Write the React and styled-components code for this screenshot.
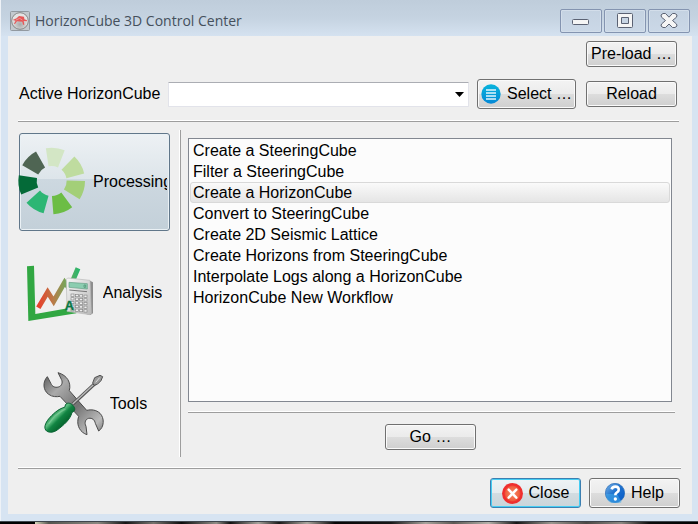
import React, { useState } from "react";
import styled, { createGlobalStyle, css } from "styled-components";

const GlobalStyle = createGlobalStyle`
  *, *::before, *::after { box-sizing: border-box; }
  body {
    margin: 0;
    background: #efefef;
    color: #000;
    font: 16px/20px "Liberation Sans", Arial, sans-serif;
  }
  button, select { font: inherit; color: inherit; margin: 0; }
`;

const Window = styled.div`
  display: flex;
  flex-direction: column;
  min-height: 100vh;
  background: #d7e4f2;
`;

const TitleBar = styled.header`
  display: flex;
  align-items: center;
  gap: 5px;
  height: 36px;
  padding: 6px 8px 0 9px;
  border-left: 1px solid #eef2f7;
  background: linear-gradient(#bfcddb, #c5d3e1 50%, #d5e2f0);
`;

const Title = styled.h1`
  flex: 1;
  margin: 0;
  font: 14px/20px "Open Sans", "Noto Sans", sans-serif;
  color: #45505c;
  white-space: nowrap;
`;

const Captions = styled.div`
  display: flex;
  gap: 2px;
`;

const CaptionButton = styled.button`
  display: grid;
  place-items: center;
  width: 42px;
  height: 24px;
  padding: 0;
  border: 1px solid #8494b0;
  border-radius: 2px;
  background: linear-gradient(#c4d2e1, #cbd8e7);
  box-shadow: inset 0 0 0 1px #d3deea;
`;

const Frame = styled.div`
  flex: 1;
  display: flex;
  flex-direction: column;
  padding: 0 6px 7px 7px;
  border-left: 1px solid #eef2f7;
`;

const Client = styled.main`
  flex: 1;
  display: flex;
  flex-direction: column;
  padding: 5px 11px 6px 10px;
  background: #efefef;
`;

const DesktopEdge = styled.div`
  height: 3px;
  border-top: 1px solid #3e464d;
  background: linear-gradient(
    90deg,
    #000 5%, #d8d8bc 5%, #55554f 7%, #8a8780 14%, #151515 18%, #77736e 22%,
    #0c0c0c 26%, #8f8d86 31%, #111 33%, #a5a29b 37%, #1b1a19 40%, #aaa69e 44%,
    #060606 48%, #171717 56%, #a7a39c 61%, #5c5954 65%, #b5b1aa 70%, #161616 74%,
    #9a968f 79%, #4b4845 84%, #8c8882 89%, #0d0d0d 93%, #000
  );
`;

const Rule = styled.hr`
  width: 100%;
  height: 2px;
  margin: 0;
  border: 0;
  border-top: 1px solid #fff;
  background: #9d9d9d;
`;

const PushButton = styled.button`
  display: flex;
  align-items: center;
  justify-content: center;
  gap: 6px;
  flex: none;
  width: ${(p) => (p.$wide ? 99 : 91)}px;
  height: ${(p) => (p.$tall ? 30 : 26)}px;
  padding: 0;
  border: 1px solid #707070;
  border-radius: 3px;
  background: linear-gradient(#f3f3f3, #ebebeb 50%, #dddddd 50%, #cfcfcf);
  box-shadow: inset 0 0 0 1px #fafafa;
  white-space: nowrap;
  ${(p) =>
    p.$default &&
    css`
      border-color: #3c7fb1;
      background: linear-gradient(#eef3f5, #e5ebee 50%, #d2dce1 50%, #cad4d9);
      box-shadow: inset 0 0 0 1px #45cdf3;
    `}
`;

const TopRow = styled.div`
  display: flex;
  justify-content: flex-end;
  padding-right: 4px;
`;

const PickerRow = styled.div`
  display: flex;
  align-items: center;
  gap: 8px;
  margin: 12px 4px 11px 1px;
`;

const ReloadSlot = styled.div`
  margin-left: 2px;
`;

const Combo = styled.div`
  display: grid;
  flex: 1;
  align-items: center;
  > * { grid-area: 1 / 1; }
  > svg { justify-self: end; margin-right: 5px; pointer-events: none; }
`;

const Select = styled.select`
  appearance: none;
  width: 100%;
  height: 25px;
  padding: 0 20px 0 4px;
  border: 1px solid #e2e3ea;
  border-top-color: #abadb3;
  border-radius: 1px;
  background: #fff;
`;

const Body = styled.div`
  flex: 1;
  display: flex;
  padding: 8px 0 10px;
`;

const Nav = styled.nav`
  display: flex;
  flex-direction: column;
  gap: 13px;
  flex: none;
  width: 162px;
  padding: 3px 10px 4px 1px;
`;

const NavButton = styled.button`
  display: flex;
  align-items: center;
  justify-content: center;
  gap: 8px;
  height: 98px;
  padding: 0;
  border: 1px solid transparent;
  border-radius: 3px;
  background: none;
  > svg { flex: none; overflow: visible; }
  ${(p) =>
    p.$active &&
    css`
      gap: 6px;
      padding-right: 2px;
      border-color: #61778a;
      background: linear-gradient(#edf1f4, #dde5ea 47%, #cdd8e0 47%, #c3d0d9);
      box-shadow: inset 0 0 0 1px #eaf1f5;
    `}
`;

const NavLabel = styled.span`
  min-width: 0;
  overflow: hidden;
  white-space: nowrap;
`;

const Panel = styled.section`
  flex: 1;
  display: flex;
  flex-direction: column;
  min-width: 0;
  padding: 8px 0 7px 7px;
  border-left: 1px solid #9d9d9d;
  box-shadow: -1px 0 0 #fff;
`;

const List = styled.ul`
  flex: 1;
  min-height: 264px;
  margin: 0 9px 9px 0;
  padding: 1px;
  border: 1px solid #828790;
  background: #fcfcfc;
  list-style: none;
`;

const ListItem = styled.button`
  display: block;
  width: 100%;
  height: 21px;
  padding: 0 0 0 2px;
  border: 1px solid transparent;
  border-radius: 3px;
  background: none;
  line-height: 19px;
  text-align: left;
  ${(p) =>
    p.$selected &&
    css`
      border-color: #d9d9d9;
      background: linear-gradient(#fafafa, #e5e5e5);
    `}
`;

const PanelRule = styled.div`
  display: flex;
  margin-right: 6px;
`;

const GoRow = styled.div`
  display: flex;
  justify-content: center;
  margin: 11px 8px 0 0;
`;

const Footer = styled.footer`
  display: flex;
  justify-content: flex-end;
  gap: 8px;
  padding: 9px 1px 0 0;
`;

const HeaderRule = styled.div`
  display: flex;
  margin-right: 2px;
`;

const AppIcon = () => (
  <svg width="20" height="20" viewBox="0 0 60 60" aria-hidden="true">
    <defs>
      <radialGradient id="app" cx=".5" cy=".7">
        <stop offset="0" stopColor="#aaa" />
        <stop offset="1" stopColor="#e4e4e4" />
      </radialGradient>
    </defs>
    <rect x="1.5" y="1.5" width="57" height="57" rx="3" fill="#c3c9ce" stroke="#9299a0" strokeWidth="3" />
    <circle cx="30" cy="30" r="25" fill="url(#app)" stroke="#888" strokeWidth="3" />
    <path d="M8 27L20 22L27 15L42 17L43 25L51 28V31L41 30L43 41H39L37 32L21 31L15 39L12 38L17 29Z" fill="#e75757" />
    <path d="M18 27L29 22L37 27" fill="none" stroke="#f2b3b3" strokeWidth="2" />
  </svg>
);

const captionStroke = { fill: "#f5f5f5", stroke: "#5b6273", strokeWidth: 1 };

const MinimizeGlyph = () => (
  <svg width="18" height="18" viewBox="0 0 18 18" aria-hidden="true">
    <rect x=".5" y="7.5" width="16" height="5" rx="1" {...captionStroke} />
  </svg>
);
const MaximizeGlyph = () => (
  <svg width="18" height="18" viewBox="0 0 18 18" aria-hidden="true">
    <path d="M1.500 2.500Q1.500 1.500 2.500 1.500H15.500Q16.500 1.500 16.500 2.500V14.500Q16.500 15.500 15.500 15.500H2.500Q1.500 15.500 1.500 14.500ZM5.500 5.500V11.500H12.500V5.500Z" fillRule="evenodd" {...captionStroke} />
  </svg>
);
const CloseGlyph = () => (
  <svg width="18" height="18" viewBox="0 0 18 18" aria-hidden="true">
    <path d="M1 3L3 1.500H5.500L9 5.200L12.500 1.500H15L17 3L16.500 5.200L12.500 8.500L16.500 12L17 14L15 15.500H12.500L9 12L5.500 15.500H3L1 14L1.500 12L5.500 8.500L1.500 5.200Z" {...captionStroke} />
  </svg>
);

const SelectIcon = () => (
  <svg width="20" height="20" viewBox="0 0 20 20" aria-hidden="true">
    <defs>
      <linearGradient id="sel" x2="0" y2="1">
        <stop offset="0" stopColor="#08b4dc" />
        <stop offset="1" stopColor="#0588d6" />
      </linearGradient>
    </defs>
    <circle cx="10" cy="10" r="9.700" fill="url(#sel)" />
    <path d="M5 6H15M5 9H15M5 12H15M5 15H15" stroke="#e4f6fd" strokeWidth="1.500" />
  </svg>
);

const CloseIcon = () => (
  <svg width="21" height="21" viewBox="0 0 60 60" aria-hidden="true">
    <defs>
      <radialGradient id="cls">
        <stop offset="0" stopColor="#f58a6a" />
        <stop offset=".65" stopColor="#f0603f" />
        <stop offset=".8" stopColor="#f02d2d" />
        <stop offset="1" stopColor="#ef3030" />
      </radialGradient>
    </defs>
    <circle cx="30" cy="30" r="30" fill="url(#cls)" />
    <path d="M19 19L41 42M41 19L19 42" stroke="#fff" strokeWidth="7" strokeLinecap="round" />
  </svg>
);

const HelpIcon = () => (
  <svg width="20" height="20" viewBox="0 0 60 60" aria-hidden="true">
    <defs>
      <linearGradient id="hlp" x2="1" y2="1">
        <stop offset="0" stopColor="#7db5e8" />
        <stop offset=".45" stopColor="#1f72ce" />
        <stop offset="1" stopColor="#0559c8" />
      </linearGradient>
    </defs>
    <circle cx="30" cy="30" r="29" fill="url(#hlp)" stroke="#2167b3" strokeWidth="2" />
    <path d="M3 32Q25 35 34 29L50 57A29 29 0 0 1 3 32Z" fill="#45b0ed" opacity=".5" />
    <path d="M20 19Q22 11 31 11Q42 11 41 21Q41 26 35 29Q31 31 31 37" fill="none" stroke="#fff" strokeWidth="8" />
    <circle cx="31" cy="48" r="5" fill="#fff" />
  </svg>
);

const SEGMENTS = [
  [-10, 23, "#d3e6c5"],
  [43, 77, "#bfdc9f"],
  [90, 123, "#a3cf78"],
  [142, 177, "#6cbd45"],
  [194, 229, "#2cb674"],
  [246, 280, "#046a38"],
  [298, 332, "#4f6553"],
];

const polar = (radius, degrees) => {
  const a = (degrees * Math.PI) / 180;
  return `${125 + radius * Math.sin(a)} ${168 - radius * Math.cos(a)}`;
};

const ProcessingIcon = () => (
  <svg width="67" height="68" viewBox="30 69 201 204" aria-hidden="true">
    {SEGMENTS.map(([from, to, fill]) => (
      <path
        key={from}
        fill={fill}
        d={`M${polar(100, from)}A100 100 0 0 1 ${polar(100, to)}L${polar(45, to + 2)}A45 45 0 0 0 ${polar(45, from - 2)}Z`}
      />
    ))}
  </svg>
);

const KEY_ROWS = [132, 143, 154, 165, 176];
const KEY_COLUMNS = [182, 195, 208, 221];

const AnalysisIcon = () => (
  <svg width="68" height="60" viewBox="50 39 204 180" aria-hidden="true">
    <defs>
      <linearGradient id="trend" gradientUnits="userSpaceOnUse" x1="85" x2="210" y1="0" y2="0">
        <stop offset="0" stopColor="#e8402c" />
        <stop offset=".35" stopColor="#b97b48" />
        <stop offset=".65" stopColor="#75a65a" />
        <stop offset="1" stopColor="#21b86e" />
      </linearGradient>
      <linearGradient id="calc" x2="1" y2="1">
        <stop offset="0" stopColor="#f6f6f6" />
        <stop offset="1" stopColor="#b9b9b9" />
      </linearGradient>
    </defs>
    <path d="M50 49L71 47L75 192L198 170V190L54 213Z" fill="#31a742" />
    <path d="M84 173L112 126L130 154L163 97L177 116L203 55" fill="none" stroke="url(#trend)" strokeWidth="15" />
    <path d="M239 92L248 97V190L240 195L229 193Z" fill="#8e8e8e" />
    <path d="M172 84L239 91L243 190L239 194L170 184L168 88Z" fill="url(#calc)" stroke="#bababa" strokeWidth="2" />
    <path d="M176 97L231 101V117L176 112Z" fill="#8bcdb0" stroke="#639f85" strokeWidth="2" />
    <path d="M221 105H226V112H221Z" fill="none" stroke="#4c8b70" strokeWidth="2" />
    <path d="M177 120L230 125" stroke="#777" strokeWidth="3" />
    {KEY_ROWS.map((y) =>
      KEY_COLUMNS.map((x) => (
        <rect key={`${x}-${y}`} x={x} y={y + (x - 182) / 12} width="9" height="7" fill="#eee" stroke="#888" strokeWidth="2" />
      ))
    )}
    <text x="163" y="179" fill="#087844" stroke="#087844" strokeWidth="1" fontFamily="Liberation Sans, Arial, sans-serif" fontSize="38" fontWeight="700">A</text>
  </svg>
);

const ToolsIcon = () => (
  <svg width="60" height="66" viewBox="98 33 180 198" aria-hidden="true">
    <defs>
      <linearGradient id="steel" x2="1" y2="1">
        <stop offset="0" stopColor="#555" />
        <stop offset=".25" stopColor="#aaa" />
        <stop offset=".55" stopColor="#737373" />
        <stop offset=".85" stopColor="#bbb" />
        <stop offset="1" stopColor="#707070" />
      </linearGradient>
      <linearGradient id="grip" gradientUnits="userSpaceOnUse" x1="125" y1="160" x2="160" y2="195">
        <stop offset="0" stopColor="#1d8a4a" />
        <stop offset=".35" stopColor="#5dbe80" />
        <stop offset=".6" stopColor="#118442" />
        <stop offset="1" stopColor="#07672f" />
      </linearGradient>
    </defs>
    <path
      d="M114 50C99 66 101 91 118 103C129 111 142 111 152 109L208 169C201 191 208 211 226 221L233 224L230 199C224 187 229 177 238 175C249 173 256 180 258 190L268 213C285 202 286 174 272 160C260 149 246 148 232 151L180 92C186 68 174 46 146 38L156 58C162 69 156 79 147 81C137 84 128 79 125 71Z"
      fill="url(#steel)" stroke="#4a4a4a" strokeWidth="3" strokeLinejoin="round"
    />
    <path d="M190 133L258 70" stroke="#555" strokeWidth="10" />
    <path d="M190 132L258 69" stroke="#bbb" strokeWidth="4" />
    <path d="M250 69L256 53L272 46L280 50L275 62L264 73L254 76Z" fill="#999" stroke="#505050" strokeWidth="3" strokeLinejoin="round" />
    <path d="M259 67L271 53" stroke="#ddd" strokeWidth="3" />
    <path
      d="M169 133C175 126 187 130 193 139C199 147 196 155 188 157C183 179 163 195 145 209C132 219 115 219 109 210C102 199 112 183 122 172C136 157 151 145 166 142Z"
      fill="url(#grip)" stroke="#086333" strokeWidth="3"
    />
    <path d="M119 190Q137 161 167 148" fill="none" stroke="#a2dbb5" strokeWidth="4" strokeLinecap="round" opacity=".4" />
  </svg>
);

const SECTIONS = [
  { name: "Processing", Icon: ProcessingIcon },
  { name: "Analysis", Icon: AnalysisIcon },
  { name: "Tools", Icon: ToolsIcon },
];

const TASKS = [
  "Create a SteeringCube",
  "Filter a SteeringCube",
  "Create a HorizonCube",
  "Convert to SteeringCube",
  "Create 2D Seismic Lattice",
  "Create Horizons from SteeringCube",
  "Interpolate Logs along a HorizonCube",
  "HorizonCube New Workflow",
];

export default function App() {
  const [section, setSection] = useState("Processing");
  const [task, setTask] = useState(2);

  return (
    <>
      <GlobalStyle />
      <Window>
        <TitleBar>
          <AppIcon />
          <Title>HorizonCube 3D Control Center</Title>
          <Captions>
            <CaptionButton type="button" aria-label="Minimize"><MinimizeGlyph /></CaptionButton>
            <CaptionButton type="button" aria-label="Maximize"><MaximizeGlyph /></CaptionButton>
            <CaptionButton type="button" aria-label="Close window"><CloseGlyph /></CaptionButton>
          </Captions>
        </TitleBar>
        <Frame>
          <Client>
            <TopRow>
              <PushButton type="button">Pre-load …</PushButton>
            </TopRow>
            <PickerRow>
              <label htmlFor="active-cube">Active HorizonCube</label>
              <Combo>
                <Select id="active-cube" defaultValue="">
                  <option value="" />
                </Select>
                <svg width="9" height="5" viewBox="0 0 9 5" aria-hidden="true">
                  <path d="M0 0H9L4.500 5Z" />
                </svg>
              </Combo>
              <PushButton type="button" $wide $tall><SelectIcon />Select …</PushButton>
              <ReloadSlot>
                <PushButton type="button">Reload</PushButton>
              </ReloadSlot>
            </PickerRow>
            <HeaderRule><Rule /></HeaderRule>
            <Body>
              <Nav aria-label="Sections">
                {SECTIONS.map(({ name, Icon }) => (
                  <NavButton
                    key={name}
                    type="button"
                    aria-pressed={section === name}
                    $active={section === name}
                    onClick={() => setSection(name)}
                  >
                    <Icon />
                    <NavLabel>{name}</NavLabel>
                  </NavButton>
                ))}
              </Nav>
              <Panel>
                <List>
                  {TASKS.map((name, index) => (
                    <li key={name}>
                      <ListItem
                        type="button"
                        aria-pressed={task === index}
                        $selected={task === index}
                        onClick={() => setTask(index)}
                      >
                        {name}
                      </ListItem>
                    </li>
                  ))}
                </List>
                <PanelRule><Rule /></PanelRule>
                <GoRow>
                  <PushButton type="button">Go …</PushButton>
                </GoRow>
              </Panel>
            </Body>
            <Rule />
            <Footer>
              <PushButton type="button" $tall $default><CloseIcon />Close</PushButton>
              <PushButton type="button" $tall><HelpIcon />Help</PushButton>
            </Footer>
          </Client>
        </Frame>
        <DesktopEdge />
      </Window>
    </>
  );
}
